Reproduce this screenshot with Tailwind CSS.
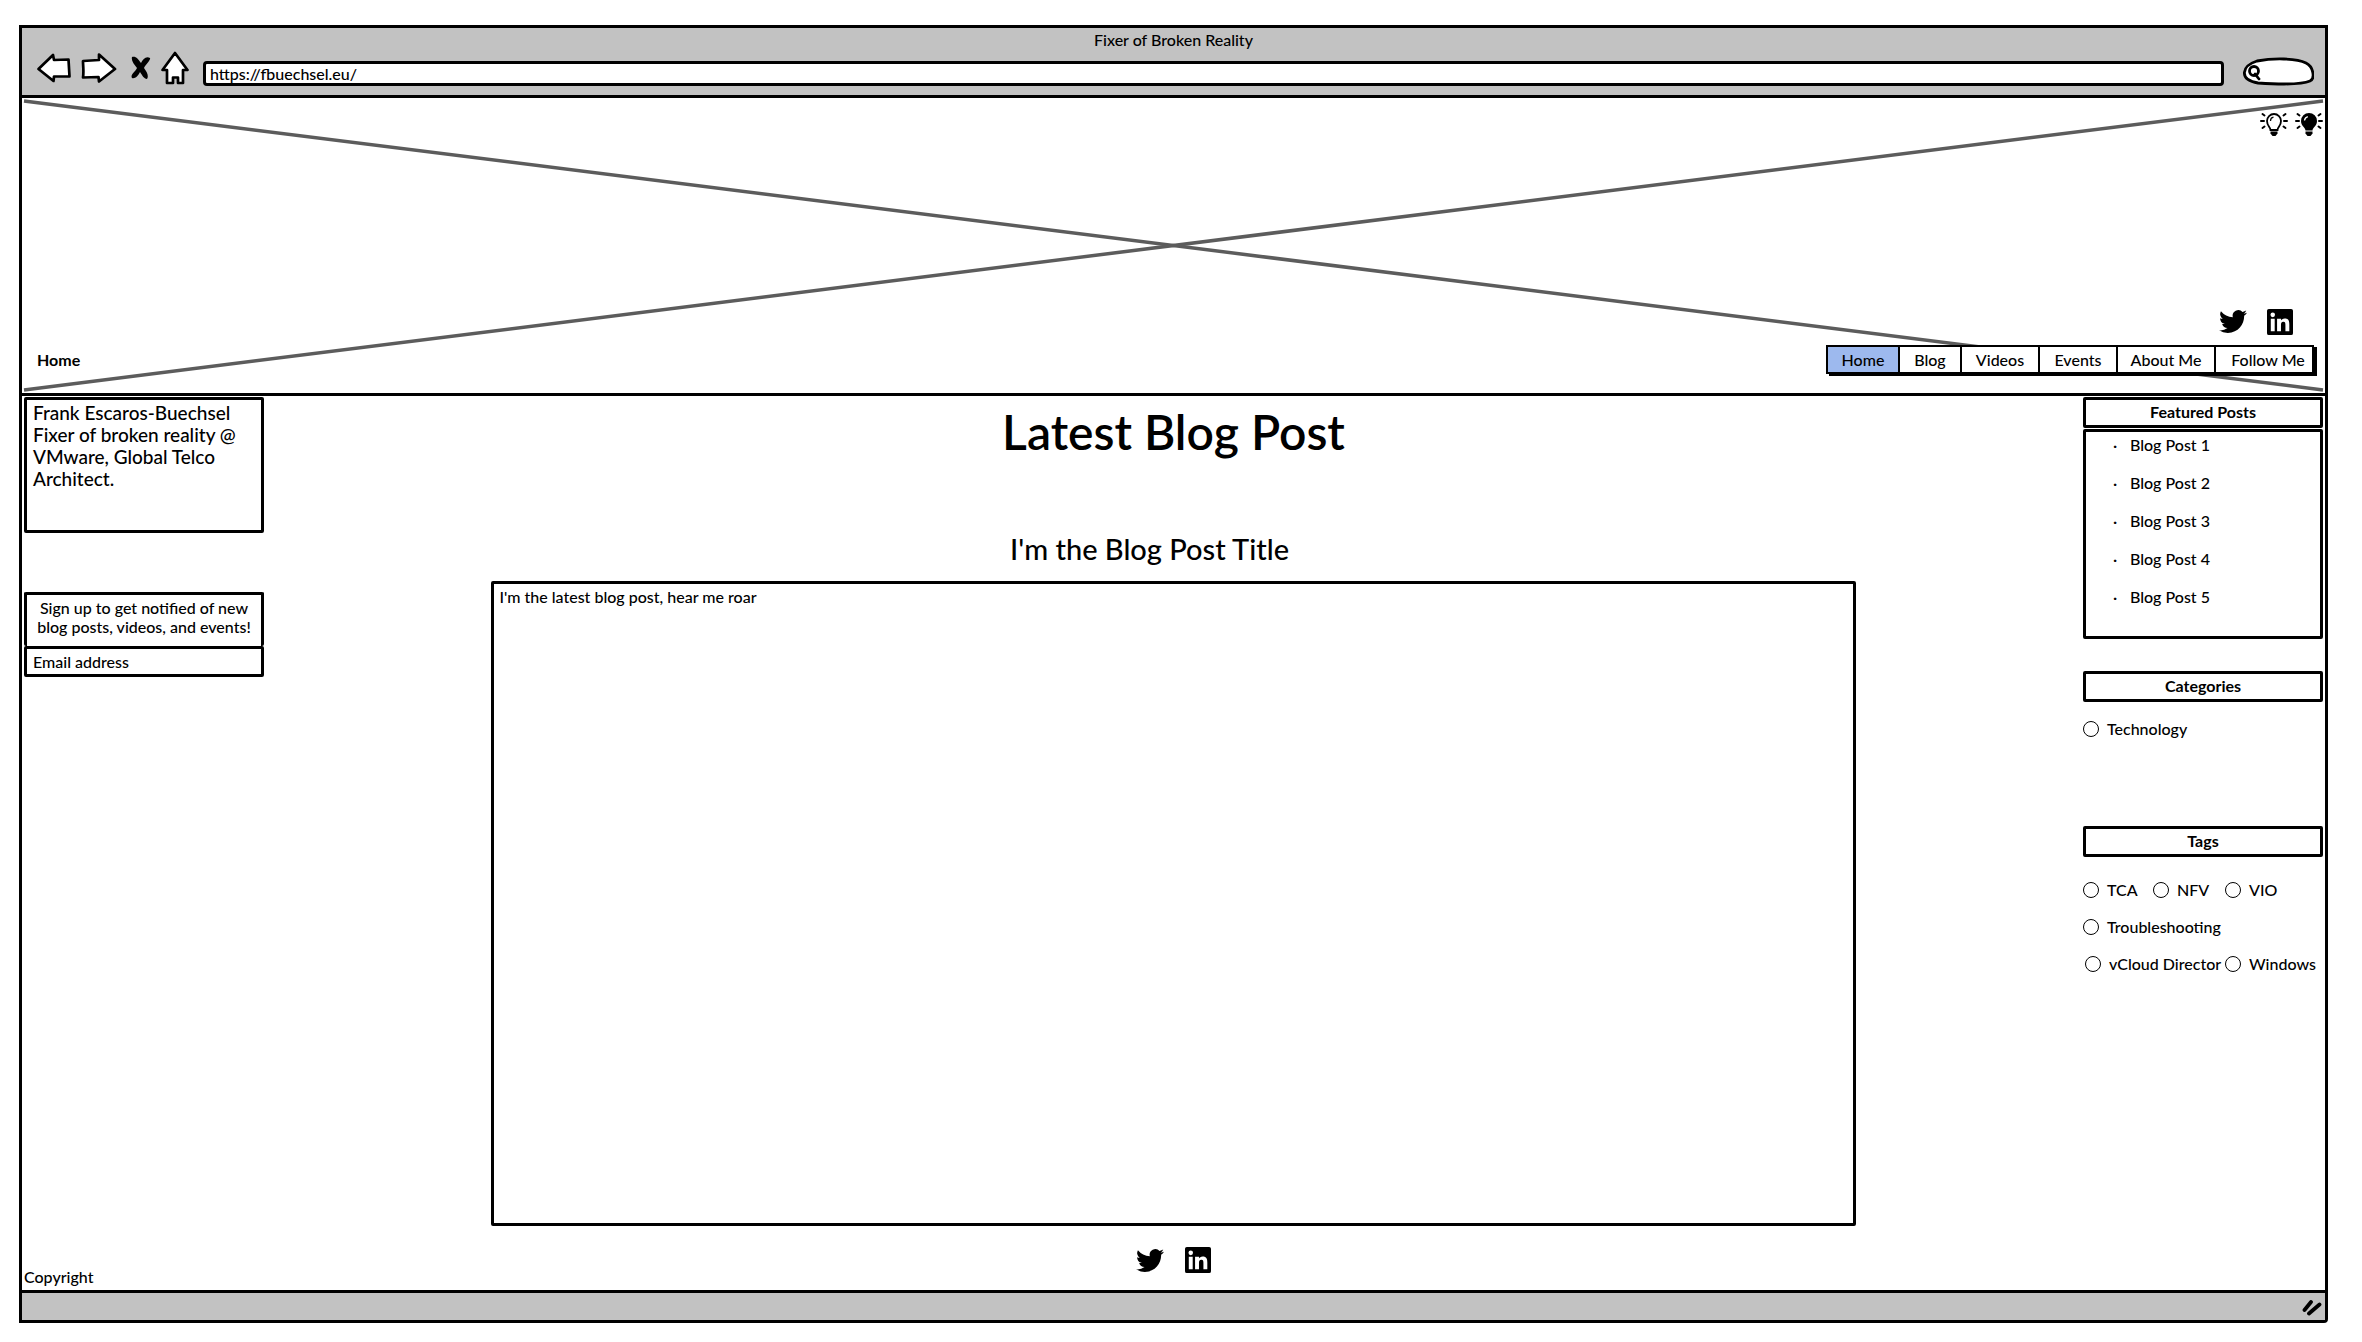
<!DOCTYPE html>
<html lang="en">
<head>
<meta charset="utf-8">
<meta name="viewport" content="width=device-width, initial-scale=1">
<title>Fixer of Broken Reality</title>
<script src="https://cdn.jsdelivr.net/npm/@tailwindcss/browser@4"></script>
</head>
<body class="min-h-screen flex flex-col bg-white pt-[25px] pr-[34px] pb-[19px] pl-[19px] font-['Lato',sans-serif] text-base leading-5 font-medium text-black">
<svg class="hidden" aria-hidden="true">
  <symbol id="twitter" viewBox="0 2 24 20"><path d="M24 4.56a9.8 9.8 0 0 1-2.83.78 4.94 4.94 0 0 0 2.17-2.73 9.9 9.9 0 0 1-3.13 1.2 4.92 4.92 0 0 0-8.38 4.48A13.98 13.98 0 0 1 1.67 3.15a4.93 4.93 0 0 0 1.52 6.57 4.9 4.9 0 0 1-2.23-.61v.06a4.93 4.93 0 0 0 3.95 4.83 4.9 4.9 0 0 1-2.22.08 4.93 4.93 0 0 0 4.6 3.42A9.9 9.9 0 0 1 0 19.54a13.94 13.94 0 0 0 7.55 2.21c9.05 0 14-7.5 14-13.98 0-.21 0-.42-.02-.63A10 10 0 0 0 24 4.56z"/></symbol>
  <symbol id="linkedin" viewBox="0 0 24 24"><path fill-rule="evenodd" d="M1.7 0h20.6A1.7 1.7 0 0 1 24 1.7v20.6a1.7 1.7 0 0 1-1.7 1.7H1.7A1.7 1.7 0 0 1 0 22.3V1.7A1.7 1.7 0 0 1 1.7 0zM3.5 9v11.5h3.6V9zM5.3 3.3a2.1 2.1 0 1 0 0 4.2 2.1 2.1 0 0 0 0-4.2zM9.3 9v11.5h3.6v-5.7c0-1.5.3-3 2.2-3s1.9 1.7 1.9 3.1v5.6h3.6v-6.3c0-3.1-.7-5.5-4.3-5.5-1.700 0-2.900 1-3.400 1.900V9z"/></symbol>
  <symbol id="rays" viewBox="0 0 28 24"><path d="M1 9h3M2.500 2l2 1.500M2.500 16l2-1.500M27 9h-3M25.500 2l-2 1.500M25.500 16l-2-1.500" fill="none" stroke="#000" stroke-width="2" stroke-linecap="round"/></symbol>
</svg>

<div class="flex flex-1 flex-col rounded-br-sm border-3 border-black">
  <div class="h-[70px] border-b-3 border-black bg-[#c2c2c2]">
    <div class="pt-[2px] text-center">Fixer of Broken Reality</div>
    <div class="flex h-9 items-end pr-[11px] pl-[15px]">
      <div class="flex items-center self-center">
        <button aria-label="Back" class="mr-[10px]"><svg class="block" width="34" height="30" viewBox="0 0 34 30"><path d="M1.500 16L16 2l1 5 14.500-.5 1 17H17l-.5 4.500z" fill="#fff" stroke="#000" stroke-width="2.700" stroke-linejoin="round"/></svg></button>
        <button aria-label="Forward" class="mr-[14px]"><svg class="block" width="36" height="30" viewBox="0 0 36 30"><path d="M2 8l16-1V1.500L34 16 18 28.500l-.5-4.500-15.500.5c1-6 0-11 0-16.500z" fill="#fff" stroke="#000" stroke-width="2.700" stroke-linejoin="round"/></svg></button>
        <button aria-label="Stop" class="mr-[10px]"><svg class="block" width="20" height="24" viewBox="0 0 20 24"><path d="M1 1c4-1 6 2 9 6 2-4 5-7 9-5 1 2-4 6-6 10 3 4 5 8 3 11-3 0-5-4-7-7-2 4-5 7-8 6-2-3 3-6 5-10C3 8 0 5 1 1z"/></svg></button>
        <button aria-label="Home page" class="mr-[14px]"><svg class="block" width="28" height="34" viewBox="0 0 28 34"><path d="M14 2l12.500 17H22v13h-5v-5.500h-5V32H6V19H1.500z" fill="#fff" stroke="#000" stroke-width="2.700" stroke-linejoin="round"/></svg></button>
      </div>
      <input aria-label="Address" value="https://fbuechsel.eu/" class="h-[25px] min-w-0 flex-1 rounded-sm border-3 border-black bg-white px-1">
      <div class="relative ml-[19px] h-[29px] w-[71px]">
        <svg class="absolute inset-0" width="71" height="29" viewBox="0 0 71 29" aria-hidden="true"><path d="M14 4C30 1 53 1 63 6c8 4 9 16 4 18-9 4-37 3-52 2C-4 23-2 9 14 4z" fill="#fff" stroke="#000" stroke-width="2.800"/><circle cx="11" cy="14" r="4.500" fill="none" stroke="#000" stroke-width="2.800"/><path d="M12 17l4 5" stroke="#000" stroke-width="2.800" stroke-linecap="round"/></svg>
        <input type="search" aria-label="Search" class="relative h-full w-full appearance-none bg-transparent pr-2 pl-5 outline-none">
      </div>
    </div>
  </div>

  <header class="relative h-[298px] border-b-3 border-black">
    <div class="absolute inset-0 px-[2px] pt-[3px] pb-[3px]"><svg class="block h-full w-full overflow-visible" aria-hidden="true"><line x1="0" y1="0" x2="100%" y2="100%" stroke="#5c5c5c" stroke-width="3.500"/><line x1="0" y1="100%" x2="100%" y2="0" stroke="#5c5c5c" stroke-width="3.500"/></svg></div>
    <div class="relative flex h-full flex-col pt-[14px] pb-[19px]">
      <div class="flex justify-end gap-[7px] pr-[2px]">
        <button aria-label="Light mode"><svg class="block" width="28" height="24" viewBox="0 0 28 24"><use href="#rays"/><path d="M10.500 18c0-3-3.500-4-3.500-9a7 7 0 0 1 14 0c0 5-3.500 6-3.500 9z" fill="#fff" stroke="#000" stroke-width="1.800"/><path d="M10.500 9c0-2 1-3.500 3-3.800" fill="none" stroke="#000" stroke-width="1.200"/><path d="M10.500 19.500h7v2l-2 2.500h-3l-2-2.500z"/></svg></button>
        <button aria-label="Dark mode"><svg class="block" width="28" height="24" viewBox="0 0 28 24"><use href="#rays"/><path d="M10.500 18.500c0-3-4.500-4.500-4.500-9.500a8 8 0 0 1 16 0c0 5-4.500 6.500-4.500 9.500z"/><path d="M9.500 8.500c.3-2 1.300-3.200 3.300-3.800" fill="none" stroke="#fff" stroke-width="1.300"/><path d="M10.500 19.500h7v2l-2 2.500h-3l-2-2.500z"/></svg></button>
      </div>
      <div class="mt-auto mb-[10px] flex justify-end gap-[20px] pr-[32px]">
        <a href="#" aria-label="Twitter"><svg class="block" width="28" height="25"><use href="#twitter"/></svg></a>
        <a href="#" aria-label="LinkedIn"><svg class="block" width="26" height="26"><use href="#linkedin"/></svg></a>
      </div>
      <div class="flex items-center justify-between pr-[11px] pl-[15px]">
        <a href="#" class="font-bold">Home</a>
        <nav class="flex h-[29px] divide-x-2 divide-black border-2 border-black bg-white text-center leading-[25px] shadow-[3px_2px_0_#000]">
          <a href="#" class="w-[72px] bg-[#9db9ee]">Home</a>
          <a href="#" class="w-[62px]">Blog</a>
          <a href="#" class="w-[78px]">Videos</a>
          <a href="#" class="w-[78px]">Events</a>
          <a href="#" class="w-[98px]">About Me</a>
          <a href="#" class="w-[96px] pl-2">Follow Me</a>
        </nav>
      </div>
    </div>
  </header>

  <main class="grid flex-1 grid-cols-[240px_1fr_240px] px-[2px] pt-[1px]">
    <aside>
      <p class="h-[136px] rounded-xs border-3 border-black px-[6px] pt-[2px] text-[19px] leading-[22px]">Frank Escaros-Buechsel<br>Fixer of broken reality @<br>VMware, Global Telco<br>Architect.</p>
      <form class="mt-[59px]">
        <label for="email" class="block h-[54px] rounded-xs border-3 border-b-0 border-black pt-[3px] text-center leading-[19px]">Sign up to get notified of new<br>blog posts, videos, and events!</label>
        <input id="email" type="email" placeholder="Email address" class="block h-[31px] w-full rounded-xs border-3 border-black px-[6px] placeholder:text-black">
      </form>
    </aside>

    <section class="flex flex-col">
      <h1 class="pt-[11px] text-center text-5xl leading-[48px] font-semibold">Latest Blog Post</h1>
      <h2 class="mt-[75px] pr-12 text-center text-[29px] leading-9">I'm the Blog Post Title</h2>
      <article class="mx-auto mt-[14px] w-3/4 flex-1 rounded-xs border-3 border-black px-[5px] pt-[3px]">
        <p>I'm the latest blog post, hear me roar</p>
      </article>
    </section>

    <aside>
      <h3 class="h-[31px] rounded-xs border-3 border-black text-center leading-6 font-bold">Featured Posts</h3>
      <ul class="mt-[1px] flex h-[210px] flex-col gap-[18px] rounded-xs border-3 border-black pt-[3px] pl-[27px]">
        <li class="flex"><span class="w-[17px]">·</span><a href="#">Blog Post 1</a></li>
        <li class="flex"><span class="w-[17px]">·</span><a href="#">Blog Post 2</a></li>
        <li class="flex"><span class="w-[17px]">·</span><a href="#">Blog Post 3</a></li>
        <li class="flex"><span class="w-[17px]">·</span><a href="#">Blog Post 4</a></li>
        <li class="flex"><span class="w-[17px]">·</span><a href="#">Blog Post 5</a></li>
      </ul>
      <h3 class="mt-[32px] h-[31px] rounded-xs border-3 border-black text-center leading-6 font-bold">Categories</h3>
      <label class="mt-[17px] flex items-center gap-2"><input type="radio" name="category" class="size-4 appearance-none rounded-full border border-black bg-white checked:bg-black">Technology</label>
      <h3 class="mt-[87px] h-[31px] rounded-xs border-3 border-black text-center leading-6 font-bold">Tags</h3>
      <div class="mt-[23px] grid grid-cols-[70px_72px_1fr] gap-y-[17px] whitespace-nowrap">
        <label class="flex items-center gap-2"><input type="radio" name="tag" class="size-4 appearance-none rounded-full border border-black bg-white checked:bg-black">TCA</label>
        <label class="flex items-center gap-2"><input type="radio" name="tag" class="size-4 appearance-none rounded-full border border-black bg-white checked:bg-black">NFV</label>
        <label class="flex items-center gap-2"><input type="radio" name="tag" class="size-4 appearance-none rounded-full border border-black bg-white checked:bg-black">VIO</label>
        <label class="col-span-3 flex items-center gap-2"><input type="radio" name="tag" class="size-4 appearance-none rounded-full border border-black bg-white checked:bg-black">Troubleshooting</label>
        <label class="col-span-2 flex items-center gap-2 pl-[2px]"><input type="radio" name="tag" class="size-4 appearance-none rounded-full border border-black bg-white checked:bg-black">vCloud Director</label>
        <label class="flex items-center gap-2"><input type="radio" name="tag" class="size-4 appearance-none rounded-full border border-black bg-white checked:bg-black">Windows</label>
      </div>
    </aside>
  </main>

  <footer class="grid h-[64px] grid-cols-[240px_1fr_240px] px-[2px]">
    <div class="self-end pb-[3px]">Copyright</div>
    <div class="flex items-center justify-center gap-[21px] pt-[4px]">
      <a href="#" aria-label="Twitter"><svg class="block" width="28" height="25"><use href="#twitter"/></svg></a>
      <a href="#" aria-label="LinkedIn"><svg class="block" width="26" height="26"><use href="#linkedin"/></svg></a>
    </div>
  </footer>
  <div class="flex h-[30px] items-center justify-end border-t-3 border-black bg-[#c2c2c2] pt-[3px] pr-[3px]">
    <svg width="20" height="16" viewBox="0 0 20 16" aria-hidden="true"><path d="M2.500 10L9 2M7 13.500L17.500 4.500" stroke="#000" stroke-width="3.800" stroke-linecap="round"/></svg>
  </div>
</div>
</body>
</html>
